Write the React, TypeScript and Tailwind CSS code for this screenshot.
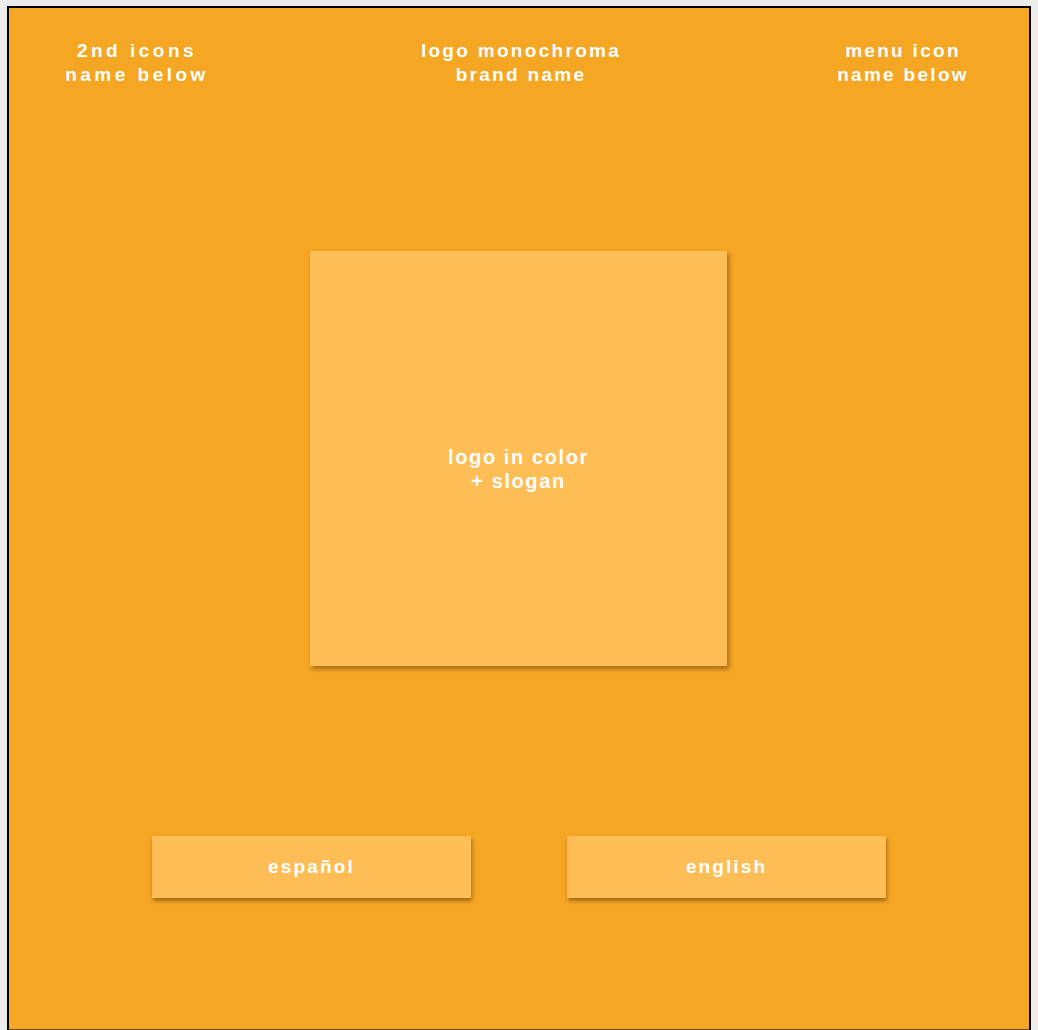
import React from "react";

const txt = "font-['Liberation_Sans',Arial,sans-serif] font-bold text-white leading-[24px] text-center";

export default function App() {
  return (
    <div className="w-[1038px] h-[1030px] bg-[#ececec] pt-[6px] pl-[7px] pr-[7px] overflow-hidden">
      <div className="h-[1024px] border-2 border-black border-b-0 bg-[#f5a623] flex flex-col">
        <div className="flex pt-[31px]">
          <div className={`w-[256px] ${txt} text-[19px] tracking-[3.5px]`}>
            <div>2nd icons</div>
            <div>name below</div>
          </div>
          <div className={`flex-1 ${txt} text-[19px] tracking-[2.3px]`}>
            <div>logo monochroma</div>
            <div>brand name</div>
          </div>
          <div className={`w-[252px] ${txt} text-[19px] tracking-[2.3px]`}>
            <div>menu icon</div>
            <div>name below</div>
          </div>
        </div>
        <div className="flex justify-center mt-[164px] pr-[1px]">
          <div className="w-[417px] h-[415px] bg-[#ffbd55] shadow-[2px_3px_5px_rgba(0,0,0,0.35)] flex items-center justify-center">
            <div className={`${txt} text-[20px] tracking-[1.6px] mt-[21px]`}>
              <div>logo in color</div>
              <div>+ slogan</div>
            </div>
          </div>
        </div>
        <div className="flex justify-center gap-[96px] mt-[170px]">
          <div className={`w-[319px] h-[62px] bg-[#ffbd55] shadow-[1px_3px_4px_rgba(0,0,0,0.35)] flex items-center justify-center ${txt} text-[19px] tracking-[2.2px]`}>
            español
          </div>
          <div className={`w-[319px] h-[62px] bg-[#ffbd55] shadow-[1px_3px_4px_rgba(0,0,0,0.35)] flex items-center justify-center ${txt} text-[19px] tracking-[2.1px]`}>
            english
          </div>
        </div>
        <div className="flex-1" />
        <div className="h-[1px] bg-[#6b4f1e]" />
      </div>
    </div>
  );
}
